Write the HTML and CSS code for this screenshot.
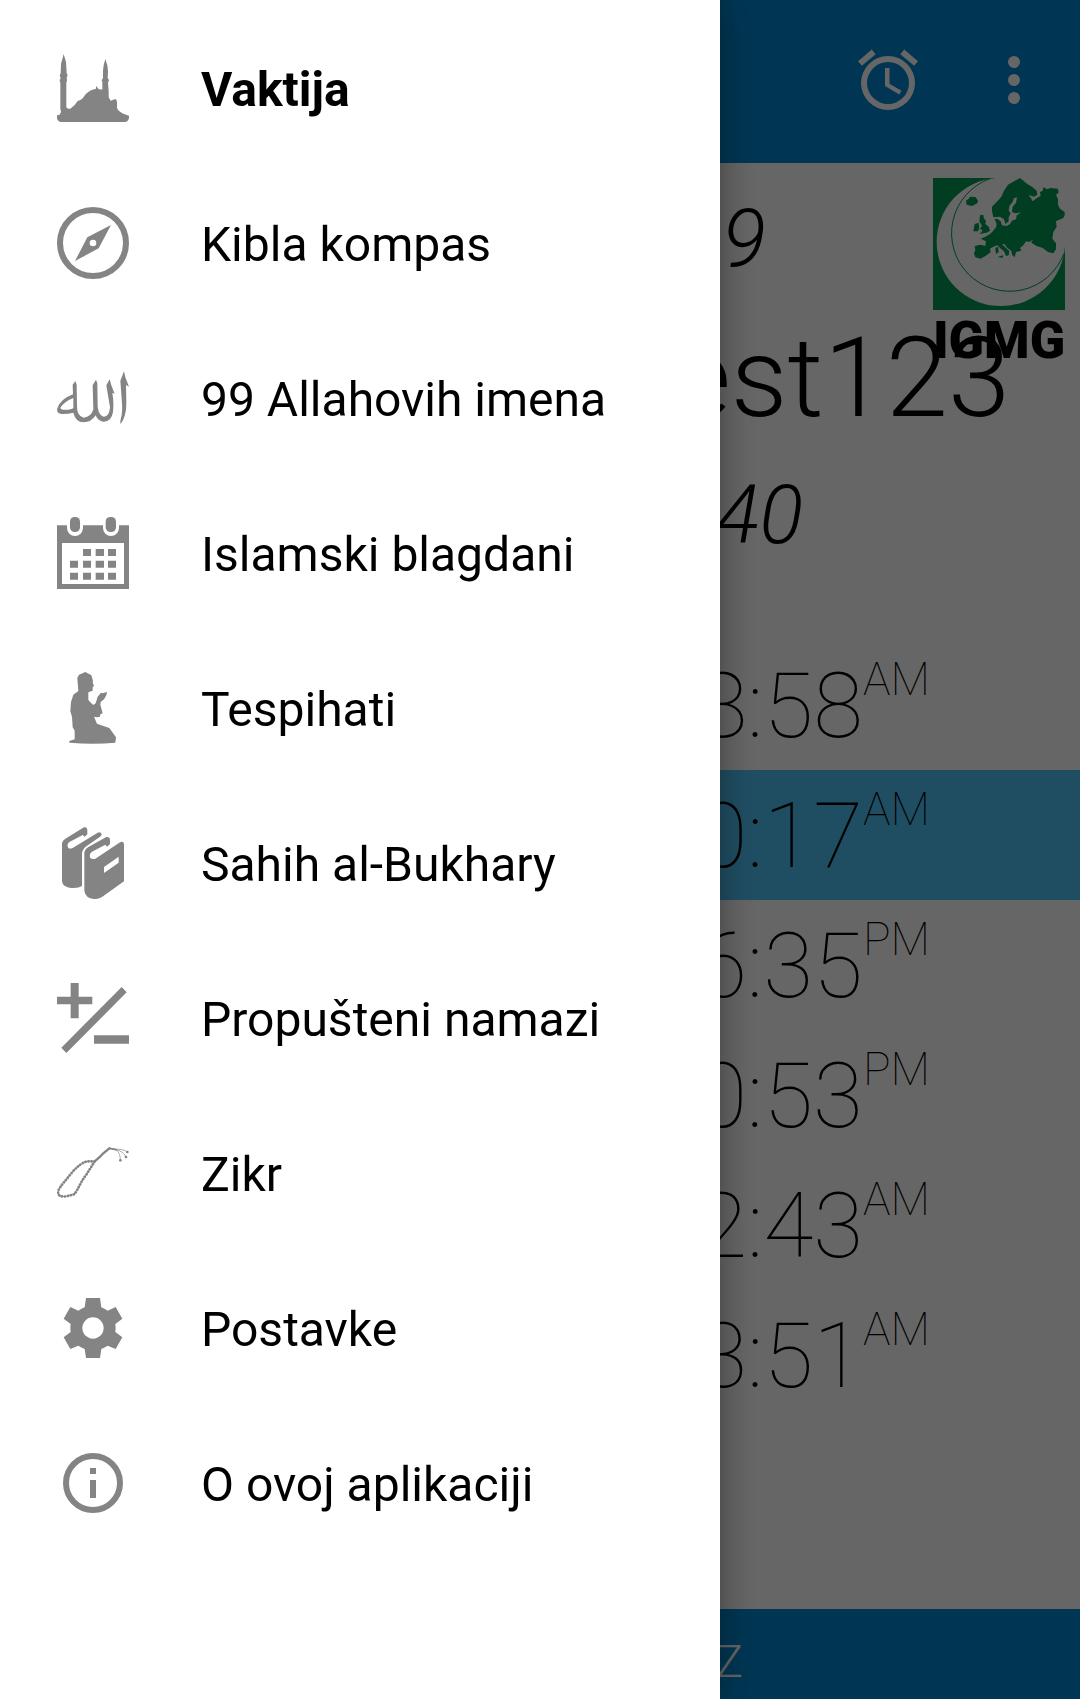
FILE: index.html
```html
<!DOCTYPE html>
<html lang="bs">
<head>
<meta charset="utf-8">
<meta name="viewport" content="width=device-width, initial-scale=1">
<title>Vaktija</title>
<link rel="stylesheet" href="styles.css">
</head>
<body>
<div class="app">
  <header class="app-bar">
    <button class="icon-button" type="button" aria-label="Alarm">
      <svg viewBox="0 0 24 24"><path d="M22 5.72l-4.6-3.86-1.29 1.53 4.6 3.86L22 5.72zM7.88 3.39L6.6 1.86 2 5.71l1.29 1.53 4.59-3.85zM12.5 8H11v6l4.75 2.85.75-1.23-4-2.37V8zM12 4a9 9 0 1 0 0 18 9 9 0 0 0 0-18zm0 16a7 7 0 1 1 0-14 7 7 0 0 1 0 14z"/></svg>
    </button>
    <button class="icon-button" type="button" aria-label="Meni">
      <svg viewBox="0 0 24 24"><circle cx="12" cy="6" r="2"/><circle cx="12" cy="12" r="2"/><circle cx="12" cy="18" r="2"/></svg>
    </button>
  </header>

  <main class="content">
    <p class="date date-gregorian">9</p>
    <h1 class="place">est123</h1>
    <p class="date date-hijri">40</p>

    <ol class="times">
      <li class="time"><span class="clock">8:58</span><span class="period">AM</span></li>
      <li class="time current"><span class="clock">10:17</span><span class="period">AM</span></li>
      <li class="time"><span class="clock">6:35</span><span class="period">PM</span></li>
      <li class="time"><span class="clock">10:53</span><span class="period">PM</span></li>
      <li class="time"><span class="clock">12:43</span><span class="period">AM</span></li>
      <li class="time"><span class="clock">3:51</span><span class="period">AM</span></li>
    </ol>

    <div class="logo">
      <svg class="logo-mark" viewBox="69 54 396 396">
        <path d="M69 54H258A192 192 0 0 0 80 246A192 192 0 0 0 272 438A192 192 0 0 0 465 258V450H69Z"/>
        <path class="logo-line" d="M240 56A174 174 0 1 0 462 280"/>
        <path d="M330 54L340 62 352 72 366 80 380 92 382 104 372 110 356 105 364 116 368 124 384 112 392 108 390 96 398 92 400 82 412 88 420 84 444 86 446 98 438 104 444 118 444 134 450 146 464 156 464 166 460 174 446 180 438 184 440 200 430 216 427 236 438 250 438 268 430 280 414 276 398 264 380 258 364 248 368 240 358 246 348 244 340 256 330 264 334 272 318 276 314 292 306 284 304 272 292 264 284 252 276 253 288 264 298 274 296 286 288 288 282 274 270 264 262 256 250 260 240 266 242 276 230 286 212 296 196 292 192 280 196 270 194 258 212 254 226 258 228 244 212 236 226 230 240 222 250 212 258 202 260 192 254 178 262 176 272 184 276 196 290 198 300 192 306 182 318 178 320 166 334 157 316 160 306 156 308 140 318 128 321 112 312 114 308 126 298 138 296 152 302 160 296 172 296 184 286 192 282 178 270 170 250 172 246 154 246 140 262 124 274 110 282 92 294 74 312 64Z"/>
        <path d="M168 122L176 116 180 110 196 111 204 122 202 130 186 138 170 134ZM210 166L220 164 222 176 228 182 226 192 236 200 240 212 230 218 208 222 218 212 210 206 216 198 208 184ZM194 192L206 188 208 204 204 214 190 214ZM256 264L264 260 266 276 258 282ZM264 290L280 286 278 293 266 292Z"/>
      </svg>
      <span class="logo-name">IGMG</span>
    </div>
  </main>

  <footer class="status">Z</footer>
</div>

<div class="scrim"></div>

<nav class="drawer" aria-label="Glavni meni">
  <a class="item active" href="#vaktija">
    <svg viewBox="81 66 216 216"><path d="M101 72L108 96 109 112 110 130 113 136 110 143 111 150 109 160V232Q113 238 121 236Q134 228 143 213Q152 212 158 205Q166 190 180 182Q190 178 197 177L200 167 203 175Q210 180 217 178V156L215 151 219 144V123L221 106 226 87 232 106 234 123 233 143 237 151 234 158 236 184V202L242 212 256 207Q261 209 261 217V234Q266 246 284 253L297 257V264Q295 274 286 276H92Q82 273 81 264V256L89 254 93 246 91 236V160L89 151 92 144 89 137 92 129 93 102Z"/></svg>
    <span>Vaktija</span>
  </a>
  <a class="item" href="#kibla">
    <svg viewBox="81 531 216 216"><circle class="ring" cx="189" cy="639" r="99"/><path fill-rule="evenodd" d="M243 585L206 655 135 693 172 622ZM189 629a10 10 0 1 0 0 20a10 10 0 0 0 0-20Z"/></svg>
    <span>Kibla kompas</span>
  </a>
  <a class="item" href="#imena">
    <svg viewBox="81 66 216 216"><path d="M282 94L286 112 297 140 288 135 289 190Q289 230 272 252Q270 246 272 238Q278 220 276 190L271 122Z"/><path d="M239 118L244 136 254 162 247 158Q252 186 249 216Q244 246 220 245Q204 244 197 226Q184 247 160 247Q137 246 130 218Q116 222 98 222Q78 222 82 205Q90 178 129 163L128 134 136 123 140 134 141 196Q140 228 161 233Q184 230 190 208L188 136 198 119 202 130 203 200Q206 226 222 230Q238 230 240 202L229 136ZM130 174Q104 184 91 203Q92 211 112 209Q128 208 130 204Z" fill-rule="evenodd"/></svg>
    <span>99 Allahovih imena</span>
  </a>
  <a class="item" href="#blagdani">
    <svg viewBox="81 531 216 216"><path fill-rule="evenodd" d="M81 556H111V564A24 24 0 0 0 159 564V556H219V564A24 24 0 0 0 267 564V556H297V747H81ZM96 609V732H282V609Z"/><rect x="120" y="531" width="30" height="45" rx="14"/><rect x="227" y="531" width="31" height="45" rx="14"/><path d="M159 627h24v21h-24zM197 627h25v21h-25zM234 627h24v21h-24zM120 662h24v21h-24zM159 662h24v21h-24zM197 662h25v21h-25zM234 662h24v21h-24zM120 698h24v21h-24zM159 698h24v21h-24zM197 698h25v21h-25zM234 698h24v21h-24z"/></svg>
    <span>Islamski blagdani</span>
  </a>
  <a class="item" href="#tespihati">
    <svg viewBox="81 66 216 216"><path d="M166 66L184 76 189 92 188 98 192 107 188 112V122L175 127V150L184 160 190 165 197 160 203 140 213 128 217 130 231 126 229 136 222 148 212 156 211 164 218 190 211 193 210 200 200 202 192 200 201 221 238 234 258 262 256 278Q190 284 118 278V273L134 268 134 242 128 232 126 200 121 184 123 156 130 134 145 123 142 84 147 74Z"/></svg>
    <span>Tespihati</span>
  </a>
  <a class="item" href="#sahih">
    <svg viewBox="81 531 216 216"><path d="M162 532Q172 530 172 542V553L164 560 158 555 117 577Q109 584 115 594Q120 597 128 594L203 548Q212 544 215 553Q215 558 208 562L170 588Q156 598 156 612V708Q144 716 118 713Q98 710 96 694V580Q97 572 106 566Z"/><path fill-rule="evenodd" d="M229 561Q240 560 240 570V582L231 590 226 584 186 605Q176 612 181 624Q186 629 196 626L268 578Q280 571 282 582V694L216 741Q206 748 192 747Q166 744 163 722V606Q164 598 174 592ZM222 651V669L266 638V620Z"/></svg>
    <span>Sahih al-Bukhary</span>
  </a>
  <a class="item" href="#propusteni">
    <svg viewBox="81 66 216 216"><path d="M122 69h24v41h41v23h-41v42h-24v-42H81v-23h41zM192 226h105v25H192zM275 81L290 97 109 279 94 263Z"/></svg>
    <span>Propušteni namazi</span>
  </a>
  <a class="item" href="#zikr">
    <svg viewBox="81 531 216 216"><path class="beads" d="M194 604H173C158 606 144 618 127 636C111 657 90 678 85 692C81 708 94 711 109 709L132 703C144 691 152 664 169 644Z"/><path class="cord" d="M194 604Q210 592 220 580L238 565"/><path class="thread" d="M238 565Q254 564 262 572T272 600M256 569Q280 572 288 590M256 568Q280 566 292 576"/><path class="strand" d="M238 565L258 569"/><circle cx="271" cy="601" r="4"/><circle cx="288" cy="591" r="4"/><circle cx="292" cy="576" r="4"/></svg>
    <span>Zikr</span>
  </a>
  <a class="item" href="#postavke">
    <svg viewBox="81 66 216 216"><path fill-rule="evenodd" d="M168 84H210L214 112Q224 116 233 122L257 111 277 146 256 162Q258 174 256 186L277 202 257 237 233 227Q224 233 214 237L210 264H168L164 237Q154 233 145 227L121 237 101 202 122 186Q120 174 122 162L101 146 121 111 145 122Q154 116 164 112ZM189 142a32 32 0 1 0 0 64a32 32 0 0 0 0-64Z"/></svg>
    <span>Postavke</span>
  </a>
  <a class="item" href="#aplikacija">
    <svg viewBox="81 531 216 216"><circle class="ring" cx="189" cy="639" r="81"/><path d="M180 594h18v18h-18zM180 630h18v54h-18z"/></svg>
    <span>O ovoj aplikaciji</span>
  </a>
</nav>
</body>
</html>
```
FILE: styles.css
```css
* {
  box-sizing: border-box;
}

body {
  margin: 0;
  background: #fff;
  color: #000;
  font-family: Roboto, "Noto Sans", sans-serif;
}

svg {
  display: block;
  fill: currentColor;
}

.app {
  display: flex;
  flex-direction: column;
  min-height: 100vh;
}

.app-bar {
  display: flex;
  align-items: center;
  justify-content: flex-end;
  gap: 54px;
  height: 163px;
  padding: 0 30px 4px;
  background: #0288d1;
  color: #fff;
}

.icon-button {
  width: 72px;
  height: 72px;
  padding: 0;
  border: 0;
  background: none;
  color: inherit;
}

.content {
  position: relative;
  flex: 1;
  padding-top: 29px;
  text-align: right;
}

.date,
.place {
  margin: 0 0 22px;
  font-weight: 300;
}

.date {
  font-size: 81px;
  line-height: 96px;
  font-style: italic;
}

.date-gregorian {
  padding-right: 314px;
}

.date-hijri {
  margin-bottom: 76px;
  padding-right: 277px;
}

.place {
  padding-right: 70px;
  font-size: 112px;
  line-height: 136px;
}

.times {
  margin: 0;
  padding: 0;
  list-style: none;
  font-weight: 100;
}

.time {
  display: flex;
  align-items: flex-start;
  justify-content: flex-end;
  height: 130px;
  padding-right: 150px;
}

.current {
  background: #4fc3f7;
}

.clock {
  font-size: 91px;
  line-height: 132px;
}

.period {
  font-size: 46px;
  line-height: 78px;
}

.logo {
  position: absolute;
  top: 15px;
  right: 15px;
  width: 132px;
  text-align: center;
}

.logo-mark {
  width: 132px;
  height: 132px;
  fill: #009a53;
}

.logo-line {
  fill: none;
  stroke: #009a53;
  stroke-width: 3;
}

.logo-name {
  display: flex;
  justify-content: center;
  font-size: 52px;
  line-height: 62px;
  font-weight: 900;
}

.status {
  height: 90px;
  padding: 16px 337px 0 0;
  background: #0288d1;
  color: #fff;
  font-size: 45px;
  line-height: 74px;
  font-weight: 300;
  text-align: right;
}

.scrim {
  position: fixed;
  inset: 0;
  background: rgba(0, 0, 0, 0.6);
}

.drawer {
  position: fixed;
  top: 0;
  bottom: 0;
  left: 0;
  width: calc(200% / 3);
  padding-top: 10px;
  background: #fff;
  box-shadow: 0 0 36px rgba(0, 0, 0, 0.4);
}

.item {
  display: flex;
  align-items: center;
  gap: 72px;
  height: 155px;
  padding: 1px 57px 0;
  color: #000;
  font-size: 48px;
  line-height: 56px;
  text-decoration: none;
  white-space: nowrap;
}

.item span {
  padding-top: 4px;
}

.item svg {
  flex: none;
  width: 72px;
  height: 72px;
  color: #848484;
}

.active {
  font-weight: 700;
}

.ring {
  fill: none;
  stroke: currentColor;
  stroke-width: 18;
}

.beads,
.cord,
.thread,
.strand {
  fill: none;
  stroke: currentColor;
  stroke-linecap: round;
}

.beads {
  stroke-width: 8;
  stroke-dasharray: 1 8;
}

.cord {
  stroke-width: 7;
}

.strand {
  stroke-width: 5;
}

.thread {
  stroke-width: 2;
}
```
